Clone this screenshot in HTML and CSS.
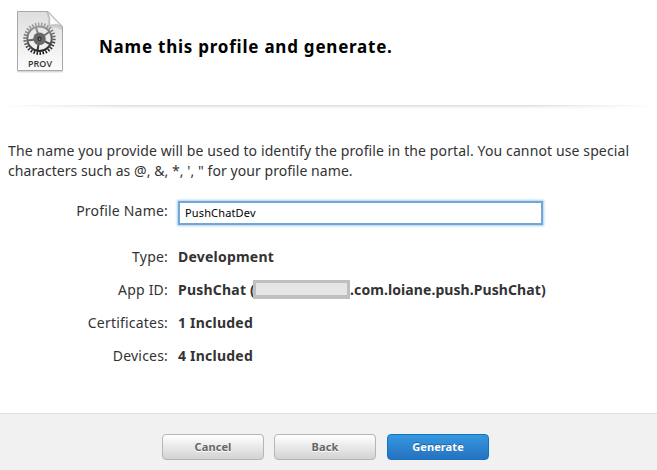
FILE: index.html
```html
<!DOCTYPE html>
<html lang="en">
<head>
<meta charset="utf-8">
<title>Name this profile and generate.</title>
<link rel="stylesheet" href="styles.css">
</head>
<body>
<header class="header">
  <svg class="prov" width="52" height="66" viewBox="14 8 52 66">
    <defs>
      <linearGradient id="paper" x1="0" y1="0" x2="0" y2="1"><stop offset="0" stop-color="#dedede"/><stop offset=".55" stop-color="#eee"/><stop offset="1" stop-color="#fdfdfd"/></linearGradient>
      <linearGradient id="metal" gradientUnits="userSpaceOnUse" x1="37" y1="22" x2="41" y2="55"><stop offset="0" stop-color="#aaa"/><stop offset=".5" stop-color="#666"/><stop offset="1" stop-color="#141414"/></linearGradient>
      <linearGradient id="fold" x1="0" y1="1" x2=".8" y2=".2"><stop offset="0" stop-color="#ccc"/><stop offset=".35" stop-color="#fff"/><stop offset="1" stop-color="#ddd"/></linearGradient>
    </defs>
    <path d="M17 71.800H63" stroke="#999" stroke-opacity=".55"/>
    <path d="M17.500 11.500H48L62.500 26.500V70.500H17.500Z" fill="url(#paper)" stroke="#a8a8a8"/>
    <path d="M46 12Q50 20 47 29Q57 25 62 31V26.500L48 12Z" fill="#888" opacity=".25"/>
    <path d="M47.500 11.500Q51 18 49.500 25.500Q58 23 62.500 27Z" fill="url(#fold)" stroke="#aaa" stroke-width=".6"/>
    <g fill="none" stroke="url(#metal)">
      <circle cx="39.500" cy="38.700" r="12.200" stroke-width="2"/>
      <circle cx="39.500" cy="38.700" r="14.600" stroke-width="3.200" pathLength="60" stroke-dasharray="1 1"/>
      <path d="M39.500 38.700L36 27.500M39.500 38.700L49.100 32M39.500 38.700L50 44M39.500 38.700L37.500 50.500M39.500 38.700L28 40.500" stroke-width="2"/>
    </g>
    <circle cx="39.500" cy="38.700" r="6.300" fill="#686868"/>
    <circle cx="39.500" cy="38.700" r="2.200" fill="#333"/>
    <circle cx="39.700" cy="39" r=".8" fill="#aaa"/>
    <text class="prov-text" x="40" y="67" text-anchor="middle" textLength="24">PROV</text>
  </svg>
  <h1>Name this profile and generate.</h1>
</header>
<div class="rule"></div>
<main>
  <p class="intro"><span class="line-one">The name you provide will be used to identify the profile in the portal. You cannot use special</span><br><span class="line-two">characters such as @, &amp;, *, ', " for your profile name.</span></p>
  <form class="details">
    <label class="label name-label" for="name">Profile Name:</label>
    <input id="name" class="name" type="text" value="PushChatDev">
    <span class="label">Type:</span><strong>Development</strong>
    <span class="label">App ID:</span><strong class="app">PushChat (<span class="mask"></span><span class="bundle">.com.loiane.push.PushChat)</span></strong>
    <span class="label">Certificates:</span><strong>1 Included</strong>
    <span class="label">Devices:</span><strong>4 Included</strong>
  </form>
</main>
<footer>
  <button>Cancel</button><button>Back</button><button class="primary">Generate</button>
</footer>
</body>
</html>
```

FILE: styles.css
```css
* { box-sizing: border-box; }
body {
  margin: 0;
  height: 470px;
  overflow: hidden;
  display: flex;
  flex-direction: column;
  background: #fff;
  color: #333;
  font: 14px/20px "Noto Sans", sans-serif;
}
.header { height: 105px; padding: 8px 0 0 14px; display: flex; align-items: flex-start; }
.prov { flex: none; }
.prov-text { font: 600 9px "Open Sans", sans-serif; fill: #333; }
h1 {
  margin: 27px 0 0 33px;
  font-size: 17px;
  line-height: 24px;
  letter-spacing: .77px;
  color: #000;
  white-space: nowrap;
}
.rule {
  height: 4px;
  background: linear-gradient(90deg, #fff, transparent 20%, transparent 80%, #fff), linear-gradient(#d9d9d9, #ededed 40%, #fff);
}
main { flex: 1; padding: 32px 8px 0; }
.intro { margin: 0; white-space: nowrap; }
.line-one { letter-spacing: .12px; }
.line-two { letter-spacing: .06px; }
.details {
  display: grid;
  grid-template-columns: 160px 1fr;
  grid-template-rows: 40px;
  grid-auto-rows: 33px;
  column-gap: 10px;
  margin-top: 19px;
}
.label { text-align: right; letter-spacing: .2px; }
.details > :nth-child(n+3) { margin-top: 7px; }
strong { white-space: nowrap; letter-spacing: .22px; }
.name-label { margin-top: 1px; }
.name {
  width: 365px;
  height: 24px;
  margin: 1px 0 0;
  padding: 0 5px 1px;
  border: 2px solid #73a6d3;
  outline: none;
  box-shadow: 0 0 2px 1px #a9cff0;
  color: #000;
  font: 11px "Noto Sans", sans-serif;
  letter-spacing: .15px;
}
.app { display: flex; }
.mask {
  width: 97px;
  height: 19px;
  margin: 0 0 0 -2px;
  background: #e5e5e5;
  border: 3px solid #bfbfbf;
  border-bottom-width: 4px;
  z-index: 1;
}
.bundle { letter-spacing: .08px; }
footer {
  height: 57px;
  padding: 20px 0 0 162px;
  display: flex;
  gap: 10px;
  background: #f1f1f1;
  border-top: 1px solid #dedede;
}
button {
  width: 102px;
  height: 26px;
  padding: 0 0 1px;
  border: 1px solid #b5b5b5;
  border-radius: 4px;
  background: linear-gradient(#fff, #d2d2d2);
  color: #666;
  font: bold 11px "Noto Sans", sans-serif;
  letter-spacing: .1px;
  text-shadow: 0 1px #fff;
}
.primary {
  margin-left: 1px;
  border-color: #0f76bd;
  background: linear-gradient(#3598e0, #2671c0);
  color: #fff;
  text-shadow: 0 -1px #1c62a5;
}
```
